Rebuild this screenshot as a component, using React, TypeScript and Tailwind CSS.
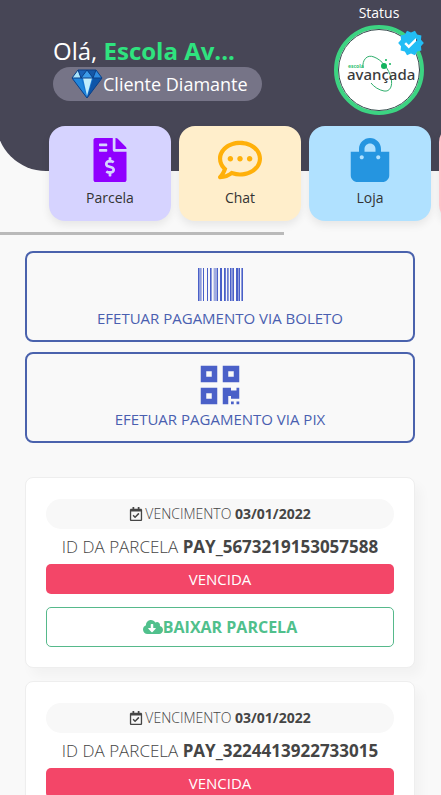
import type { ReactNode } from 'react';
import {
  FaCloudDownloadAlt,
  FaFileInvoiceDollar,
  FaQrcode,
  FaRegCalendarCheck,
  FaRegCommentDots,
  FaShoppingBag,
} from 'react-icons/fa';
import { MdVerified } from 'react-icons/md';

const SHORTCUTS = [
  { label: 'Parcela', icon: <FaFileInvoiceDollar className="text-[#9000ff]" />, color: 'bg-[#d6d3ff]' },
  { label: 'Chat', icon: <FaRegCommentDots className="text-[#ffb00a]" />, color: 'bg-[#ffeecb]' },
  { label: 'Loja', icon: <FaShoppingBag className="text-[#2595e0]" />, color: 'bg-[#b0e1ff]' },
  { label: '', icon: null, color: 'bg-[#ffc4cb]' },
];

const INSTALLMENTS = [
  { id: 'PAY_5673219153057588', dueDate: '03/01/2022' },
  { id: 'PAY_3224413922733015', dueDate: '03/01/2022' },
];

function Diamond() {
  return (
    <svg viewBox="0 0 32 30" className="h-[30px] w-8" aria-hidden="true">
      <path d="M7 1h18l6 8-15 20L1 9z" fill="#1676d2" />
      <path d="M7 1 1 9h9z" fill="#a9e4fb" />
      <path d="m7 1 3 8 6-8z" fill="#1b63b8" />
      <path d="m16 1-6 8h12z" fill="#3c9be8" />
      <path d="m16 1 6 8 3-8z" fill="#1557a6" />
      <path d="m25 1-3 8h9z" fill="#2f8be0" />
      <path d="M1 9h9l6 20z" fill="#2187dd" />
      <path d="M12 9h9l-5 18z" fill="#c2eefc" />
      <path d="M22 9h9L16 29z" fill="#0d55a8" />
      <path
        d="M7 1h18l6 8-15 20L1 9zM1 9h30M7 1l3 8 6-8 6 8 3-8"
        fill="none"
        stroke="#0d3f85"
        strokeWidth="1"
        strokeLinejoin="round"
      />
    </svg>
  );
}

function Barcode() {
  return (
    <svg viewBox="0 0 45 44" className="h-11 w-[45px]" fill="currentColor" aria-hidden="true">
      <path d="M0 6h1.6v33H0zM2.4 6h1v33h-1zM5 6h1v33H5zM9 6h1v33H9zM12 6h1.6v33H12zM19 6h1v33h-1zM22 6h2v33h-2zM26 6h1.8v33H26zM29.2 6h1.4v33h-1.4zM32 6h1.4v33H32zM34.4 6h1.6v33h-1.6zM38 6h2.4v33H38zM41 6h1v33h-1zM43.4 6H45v33h-1.6z" />
      <path d="M15.6 6h3.4v33h-3.4zM33.4 6h1v33h-1zM40.4 6h.6v33h-.6z" opacity=".5" />
    </svg>
  );
}

function SchoolLogo() {
  return (
    <svg viewBox="0 0 80 80" className="size-full" role="img" aria-label="Escola Avançada">
      <path
        d="M24 38c-1-8 4-14 11-11 8 3 15 12 17 21 2 8-1 14-7 13-5-1-10-4-13-8"
        fill="none"
        stroke="#2fae6c"
        strokeWidth="1"
      />
      <circle cx="45" cy="36" r="3" fill="#12b45e" />
      <circle cx="47" cy="30" r="1" fill="#12b45e" />
      <circle cx="51" cy="34" r="1" fill="#12b45e" />
      <text x="9" y="38" className="fill-[#2fbf74] font-['Noto_Sans'] text-[5px] font-bold">
        escola
      </text>
      <text x="8" y="50" className="fill-[#3a3a3c] font-['Noto_Sans'] text-[15px] font-medium">
        avançada
      </text>
    </svg>
  );
}

function PaymentButton({ icon, children }: { icon: ReactNode; children: ReactNode }) {
  return (
    <button
      type="button"
      className="flex h-[91px] w-full flex-col items-center rounded-lg border-2 border-[#4a62ad] pt-[9px] text-[15px] leading-6 text-[#4a5fb0]"
    >
      <span className="text-[44px] text-[#4a60c8]">{icon}</span>
      {children}
    </button>
  );
}

function InstallmentCard({ id, dueDate }: { id: string; dueDate: string }) {
  return (
    <article className="rounded-lg border border-[#eeeeee] bg-white px-5 pt-[21px] pb-5 text-center text-[#454545] shadow-[6px_8px_12px_rgba(0,0,0,0.03)]">
      <p className="flex h-[30px] items-center justify-center gap-0.5 rounded-full bg-[#f8f8f8] text-sm font-light">
        <FaRegCalendarCheck />
        <span>
          VENCIMENTO <strong className="font-bold">{dueDate}</strong>
        </span>
      </p>
      <h2 className="text-[17px] leading-[35px] font-light whitespace-nowrap">
        ID DA PARCELA <strong className="font-bold">{id}</strong>
      </h2>
      <p className="rounded-[5px] bg-[#f34668] text-[15px] leading-[30px] text-white">VENCIDA</p>
      <button
        type="button"
        className="mt-[13px] flex h-10 w-full items-center justify-center rounded-[5px] border border-[#56b98b] text-base font-bold text-[#50c08c]"
      >
        <FaCloudDownloadAlt className="text-xl" />
        BAIXAR PARCELA
      </button>
    </article>
  );
}

export default function App() {
  return (
    <div className="min-h-screen overflow-x-clip bg-[#f9f9f9] pb-8 font-['Open_Sans','Noto_Sans',sans-serif]">
      <header className="-ml-1 flex h-[171px] items-start justify-between rounded-bl-[50px] bg-[#474656] pr-[17px] pl-[57px] text-white">
        <div className="pt-[34px]">
          <h1 className="text-2xl leading-[33px]">
            Olá, <strong className="font-bold text-[#2fe37f]">Escola Av...</strong>
          </h1>
          <p className="flex h-[34px] items-center rounded-full bg-[#767487] pr-3.5 pl-[18px] text-lg whitespace-nowrap">
            <Diamond />
            Cliente Diamante
          </p>
        </div>
        <div className="text-center">
          <p className="text-sm leading-[25px]">Status</p>
          <div className="relative size-[90px] rounded-full border-4 border-[#3cd482] bg-white">
            <div className="size-full overflow-hidden rounded-full border border-[#32484a]">
              <SchoolLogo />
            </div>
            <span className="absolute top-2 right-1 size-3 bg-white" />
            <MdVerified className="absolute top-0 -right-[5px] size-7 text-[#22bdf5]" />
          </div>
        </div>
      </header>

      <nav className="-mt-[45px] flex gap-2 pl-[49px]">
        {SHORTCUTS.map(({ label, icon, color }) => (
          <button
            key={label}
            type="button"
            className={`flex h-[95px] w-[122px] shrink-0 flex-col items-center rounded-2xl pt-3 text-sm font-medium text-[#333333] shadow-[0_4px_8px_rgba(0,0,0,0.08)] ${color}`}
          >
            <span className="text-[44px]">{icon}</span>
            <span className="leading-8">{label}</span>
          </button>
        ))}
      </nav>
      <div className="mt-[11px] h-[3px] w-[64.4%] bg-[#bababa]" />

      <main className="pt-4 pr-[26px] pl-[25px]">
        <div className="flex flex-col gap-2.5">
          <PaymentButton icon={<Barcode />}>EFETUAR PAGAMENTO VIA BOLETO</PaymentButton>
          <PaymentButton icon={<FaQrcode />}>EFETUAR PAGAMENTO VIA PIX</PaymentButton>
        </div>
        <div className="mt-[34px] flex flex-col gap-[13px]">
          {INSTALLMENTS.map((item) => (
            <InstallmentCard key={item.id} {...item} />
          ))}
        </div>
      </main>
    </div>
  );
}
